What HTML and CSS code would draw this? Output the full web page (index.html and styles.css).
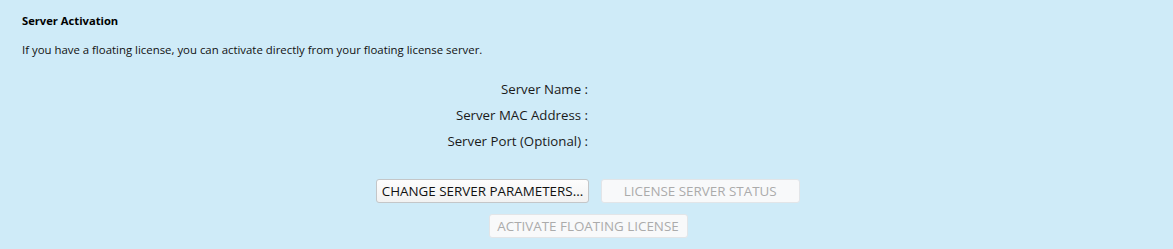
FILE: index.html
```html
<!DOCTYPE html>
<html>
<head>
<meta charset="utf-8">
<link rel="stylesheet" href="styles.css">
</head>
<body>
<div class="panel">
  <h1 class="title">Server Activation</h1>
  <p class="intro">If you have a floating license, you can activate directly from your floating license server.</p>
  <div class="center">
    <div class="fields">
      <div class="label">Server Name :</div><div class="value"></div>
      <div class="label">Server MAC Address :</div><div class="value"></div>
      <div class="label">Server Port (Optional) :</div><div class="value"></div>
    </div>
    <div class="btn-row first">
      <button class="btn">CHANGE SERVER PARAMETERS...</button>
      <button class="btn" disabled>LICENSE SERVER STATUS</button>
    </div>
    <div class="btn-row">
      <button class="btn" disabled>ACTIVATE FLOATING LICENSE</button>
    </div>
  </div>
</div>
</body>
</html>
```
FILE: styles.css
```css
html, body {
  margin: 0;
  padding: 0;
  background: #cfebf8;
}
body {
  font-family: "Open Sans", sans-serif;
  color: #1b1b1b;
  width: 1173px;
  height: 249px;
  overflow: hidden;
}
.panel {
  padding-top: 12.6px;
}
.title {
  margin: 0 0 0 22px;
  font-size: 11.2px;
  font-weight: 700;
  line-height: 16px;
  color: #000;
}
.intro {
  margin: 13.8px 0 0 22px;
  font-size: 11.4px;
  line-height: 16px;
  color: #111;
}
.center {
  margin-left: 3px;
}
.fields {
  margin-top: 17.9px;
  display: grid;
  grid-template-columns: 1fr 1fr;
}
.label {
  text-align: right;
  font-size: 13.25px;
  line-height: 26px;
  color: #1a1a1a;
  white-space: nowrap;
}
.btn-row {
  display: flex;
  justify-content: center;
  gap: 12px;
  margin-top: 11px;
}
.btn-row.first {
  margin-top: 24.5px;
}
.btn {
  box-sizing: border-box;
  height: 24px;
  min-width: 199px;
  padding: 0 4.5px;
  margin: 0;
  font-family: "Open Sans", sans-serif;
  font-size: 13.4px;
  line-height: 22px;
  color: #111;
  background: linear-gradient(#fdfdfd, #f2f2f2);
  border: 1px solid #c4c6c8;
  border-radius: 3px;
  white-space: nowrap;
  text-align: center;
}
.btn:disabled {
  color: #ababab;
  background: #f8f9fa;
  border-color: #e2e5e8;
}
```
